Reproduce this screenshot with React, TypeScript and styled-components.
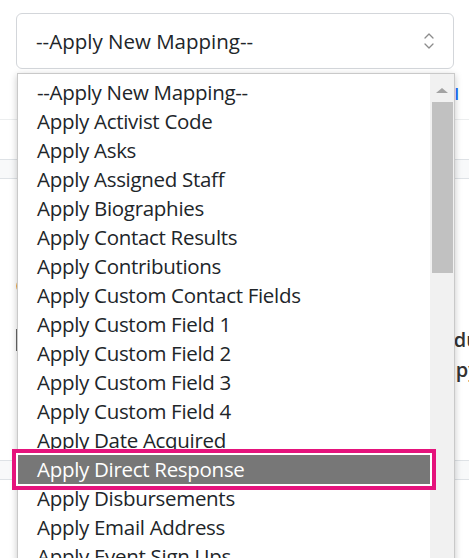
import React from 'react'
import styled, { createGlobalStyle } from 'styled-components'

const GlobalStyle = createGlobalStyle`
  html, body {
    margin: 0;
    padding: 0;
    height: 100%;
    overflow: hidden;
    background: #fff;
  }
  body {
    font-family: "Open Sans", "Noto Sans", sans-serif;
    color: #212529;
  }
`

const mappings = [
  '--Apply New Mapping--',
  'Apply Activist Code',
  'Apply Asks',
  'Apply Assigned Staff',
  'Apply Biographies',
  'Apply Contact Results',
  'Apply Contributions',
  'Apply Custom Contact Fields',
  'Apply Custom Field 1',
  'Apply Custom Field 2',
  'Apply Custom Field 3',
  'Apply Custom Field 4',
  'Apply Date Acquired',
  'Apply Direct Response',
  'Apply Disbursements',
  'Apply Email Address',
  'Apply Event Sign Ups',
  'Apply Events',
  'Apply Extended Source Codes',
]

const SELECTED = 'Apply Direct Response'

const Page = styled.div`
  position: relative;
  min-height: 100vh;
`

const Header = styled.div`
  padding: 13px 15px 0 16px;
`

const SelectBox = styled.div`
  box-sizing: border-box;
  width: 438px;
  height: 56px;
  display: flex;
  align-items: center;
  justify-content: space-between;
  padding: 0 19px 0 19px;
  border: 1px solid #d3d6da;
  border-radius: 6px;
  font-size: 20.5px;
  letter-spacing: 0;
  background: #fff;
`

const LinkRow = styled.div`
  height: 50px;
  display: flex;
  justify-content: flex-end;
  align-items: center;
  padding-right: 10px;
  border-bottom: 1px solid #eceeef;
`

const Link = styled.span`
  color: #0d6efd;
  font-size: 16px;
  font-weight: 600;
`

const Band = styled.div<{ $top: number }>`
  margin-top: ${p => p.$top}px;
  height: 18px;
  background: #f8f9fa;
  border-top: 1px solid #dee2e6;
  border-bottom: 1px solid #dee2e6;
`

const Content = styled.div`
  padding: 100px 0 0 15px;
  display: flex;
  flex-direction: column;
`

const WarnIcon = styled.span`
  display: block;
  width: 14px;
  height: 14px;
  margin-left: 1px;
  border-radius: 50%;
  background: #f0ad4e;
  margin-bottom: 32px;
`

const TextLine = styled.div`
  display: flex;
  justify-content: space-between;
  align-items: center;
  height: 30px;
  line-height: 30px;
  font-size: 20px;
  font-weight: 600;
  color: #333;
  margin-right: -10px;
  white-space: nowrap;
`

const InputEdge = styled.span`
  display: block;
  width: 2px;
  height: 22px;
  margin-left: 1px;
  background: #666;
`

const Dropdown = styled.div`
  position: absolute;
  top: 73px;
  left: 17px;
  width: 438px;
  height: 620px;
  box-sizing: border-box;
  display: flex;
  background: #fff;
  border: 1px solid #c9c9c9;
  box-shadow: 0 2px 7px rgba(0, 0, 0, 0.22);
`

const OptionList = styled.div`
  flex: 1;
  padding-top: 4px;
  display: flex;
  flex-direction: column;
`

const Option = styled.div<{ $selected?: boolean }>`
  position: relative;
  height: 29px;
  line-height: 28px;
  padding-left: 19px;
  font-size: 20.5px;
  letter-spacing: -0.3px;
  white-space: nowrap;
  color: ${p => (p.$selected ? '#fff' : '#212529')};
  background: ${p => (p.$selected ? '#777' : 'transparent')};
  ${p =>
    p.$selected &&
    `
    z-index: 2;
    box-shadow: 0 0 0 2px #fff, 0 0 0 6px #e5137c;
  `}
`

const Scrollbar = styled.div`
  width: 24px;
  background: #f1f1f1;
  display: flex;
  flex-direction: column;
  align-items: center;
`

const ArrowUp = styled.div`
  width: 0;
  height: 0;
  margin: 14px 0 9px;
  border-left: 6px solid transparent;
  border-right: 6px solid transparent;
  border-bottom: 5px solid #a3a3a3;
`

const Thumb = styled.div`
  width: 21px;
  height: 171px;
  margin-left: 1px;
  background: #c1c1c1;
`

const Chevrons = () => (
  <svg width="10" height="18" viewBox="0 0 10 18" fill="none" stroke="#8c8c8c" strokeWidth="1.3" strokeLinecap="round" strokeLinejoin="round">
    <polyline points="1,6 5,2 9,6" />
    <polyline points="1,12 5,16 9,12" />
  </svg>
)

export default function App() {
  return (
    <Page>
      <GlobalStyle />
      <Header>
        <SelectBox>
          <span>--Apply New Mapping--</span>
          <Chevrons />
        </SelectBox>
      </Header>
      <LinkRow>
        <Link>Clear all</Link>
      </LinkRow>
      <Band $top={39} />
      <Content>
        <WarnIcon />
        <TextLine>
          <InputEdge />
          <span>du</span>
        </TextLine>
        <TextLine>
          <span />
          <span>py</span>
        </TextLine>
      </Content>
      <Band $top={75} />
      <Dropdown>
        <OptionList>
          {mappings.map(m => (
            <Option key={m} $selected={m === SELECTED}>
              {m}
            </Option>
          ))}
        </OptionList>
        <Scrollbar>
          <ArrowUp />
          <Thumb />
        </Scrollbar>
      </Dropdown>
    </Page>
  )
}
